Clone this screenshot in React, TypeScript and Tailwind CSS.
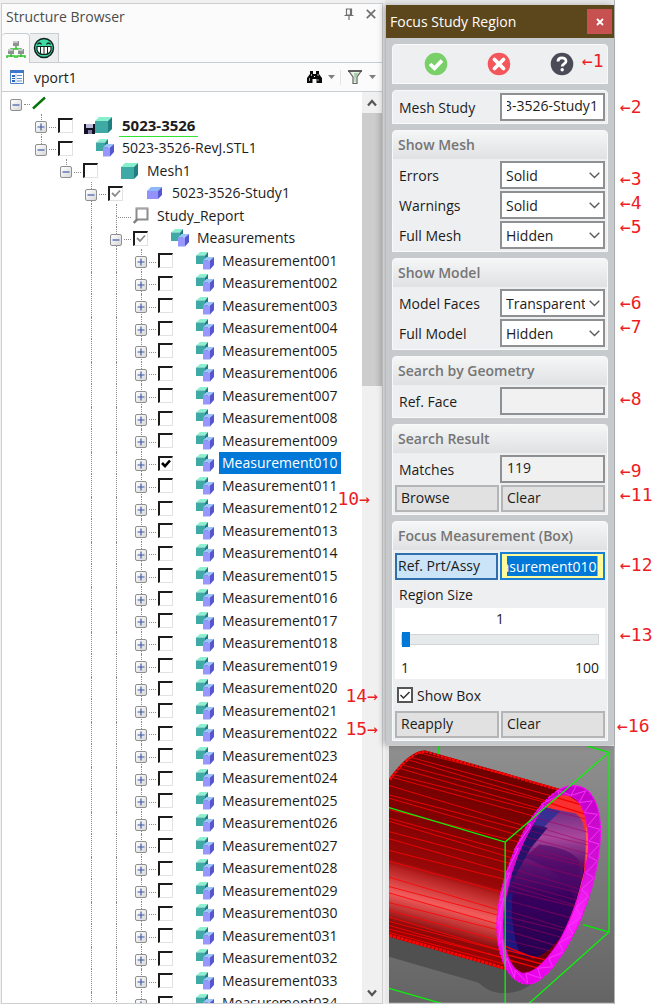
import { useCallback, useId } from "react";
import type { ReactNode } from "react";

/* ---------- small icons ---------- */

function TealCube() {
  return (
    <g>
      <path d="M0 4 4 0H17L13 4Z" fill="#86efcb" />
      <path d="M13 4 17 0V12L13 16Z" fill="#1f7f80" />
      <path d="M0 4H13V16H0Z" fill="#3fa9a6" />
    </g>
  );
}

function CubeIcon() {
  return (
    <svg viewBox="0 0 17 16" className="h-4 w-[17px]">
      <TealCube />
    </svg>
  );
}

function PurpleCubeIcon() {
  return (
    <svg viewBox="0 0 17 16" className="h-4 w-[17px]">
      <path d="M1 6 5 2H16L12 6Z" fill="#8fb8fb" />
      <path d="M12 6 16 2V10L12 14Z" fill="#5457cf" />
      <path d="M1 6H12V14H1Z" fill="#9392fb" />
    </svg>
  );
}

function PairIcon() {
  return (
    <svg viewBox="0 0 18 18" className="h-[18px] w-[18px]">
      <path d="M0 3.500 4 0H12L9 3.500Z" fill="#8ef0cf" />
      <path d="M9 3.500 12 0V9L9 12Z" fill="#1f7f80" />
      <path d="M0 3.500H9V12H0Z" fill="#3fa9a6" />
      <path d="M7 8.500 10.500 5H18L14 8.500Z" fill="#9cc6fb" />
      <path d="M14 8.500 18 5V13L14 17.500Z" fill="#5457cf" />
      <path d="M7 8.500H14V17.500H7Z" fill="#9897fd" />
    </svg>
  );
}

function DiskCubeIcon() {
  return (
    <svg viewBox="0 0 28 17" className="-ml-3 h-[17px] w-7">
      <path d="M0 7H11V17H0Z" fill="#111122" />
      <path d="M2 7H9V11H2Z" fill="#b9b9d8" />
      <path d="M4 13H8V17H4Z" fill="#7d7da5" />
      <g transform="translate(11 0)">
        <TealCube />
      </g>
    </svg>
  );
}

function ReportIcon() {
  return (
    <svg viewBox="0 0 16 17" className="h-[17px] w-4">
      <path d="M3.500 1.500H14.500V12.500H3.500Z" fill="#fff" stroke="#8c8c8c" strokeWidth="2" />
      <path d="M3 1H15" stroke="#bdbdbd" strokeWidth="1" />
      <path d="M4.500 12 .8 16" stroke="#7e7e7e" strokeWidth="2.400" />
    </svg>
  );
}

function StructureTabIcon() {
  return (
    <svg viewBox="0 0 20 20" className="h-5 w-5">
      <path d="M10 7V10M5 12V10H15V12M5 15V18M15 15V18M1 19V17H9V19M11 19V17H19V19" stroke="#2fc22f" strokeWidth="1.500" fill="none" />
      <path d="M7 2H13V7H7ZM2 10H8V15H2ZM12 10H18V15H12Z" fill="#8f9091" />
      <path d="M7 2H12V4H7ZM2 10H7V12H2ZM12 10H17V12H12Z" fill="#c4c5c6" />
    </svg>
  );
}

function GrinTabIcon() {
  return (
    <svg viewBox="0 0 22 22" className="h-[22px] w-[22px]">
      <circle cx="11" cy="11" r="9.500" fill="#3fd9a4" stroke="#10241e" strokeWidth="1.500" />
      <path d="M4.500 7.500Q6.500 4.500 8.500 7.500M13.500 7.500Q15.500 4.500 17.500 7.500" stroke="#10241e" strokeWidth="1.300" fill="none" />
      <path d="M4 9.500H18V13Q17 17.500 11 17.500T4 13Z" fill="#fff" stroke="#10241e" strokeWidth="1.200" />
      <path d="M7.500 9.500V16.500M11 9.500V17M14.500 9.500V16.500" stroke="#10241e" strokeWidth="1" />
    </svg>
  );
}

function VportIcon() {
  return (
    <svg viewBox="0 0 14 14" className="h-[14px] w-[14px]">
      <path d="M.5 .5H13.500V13.500H.5Z" fill="#fff" stroke="#4f82c8" />
      <path d="M0 0H14V3H0Z" fill="#3f78c8" />
      <path d="M2 5H5V7H2ZM2 8H5V9H2ZM2 10H5V12H2Z" fill="#2f67b8" />
      <path d="M7 5.500H12M7 8.500H12M7 11H12" stroke="#5d8fd0" />
      <path d="M6 3V13" stroke="#9fbde6" strokeWidth=".8" />
    </svg>
  );
}

function BinocularsIcon() {
  return (
    <svg viewBox="0 0 15 13" className="h-[13px] w-[15px]">
      <path d="M3 0H6V3H9V0H12V3L15 7V12H9.500V8H5.500V12H0V7L3 3Z" fill="#0a0a0a" />
      <path d="M2.500 7V10M11 8V10M4.500 3V5M11 3V5" stroke="#cfcfcf" strokeWidth=".8" />
      <path d="M7 5H8V6H7Z" fill="#fff" />
    </svg>
  );
}

function FunnelIcon() {
  return (
    <svg viewBox="0 0 14 15" className="h-[15px] w-[14px]">
      <path d="M.8 1H13.200L9 7V13.500H5V7Z" fill="#e9f3e9" stroke="#666" strokeWidth="1.200" />
      <path d="M6 3H11L7.500 8V12H6.500Z" fill="#a9cfaa" />
      <path d="M0 1H14" stroke="#444" strokeWidth="1.500" />
    </svg>
  );
}

function CaretDown() {
  return (
    <svg viewBox="0 0 7 4" className="h-1 w-[7px]">
      <path d="M0 0H7L3.500 4Z" fill="#7d7d7d" />
    </svg>
  );
}

/* ---------- tree ---------- */

type Mark = "none" | "checked" | "partial";

type TreeNode = {
  level: number;
  label: string;
  icon: ReactNode;
  mark?: Mark;
  expander?: "+" | "-";
  guides?: number[];
  above?: boolean;
  below?: boolean;
  selected?: boolean;
  active?: boolean;
};

const measurements: TreeNode[] = Array.from({ length: 34 }, (_, i) => ({
  level: 5,
  label: `Measurement${String(i + 1).padStart(3, "0")}`,
  icon: <PairIcon />,
  mark: i === 9 ? "checked" : "none",
  expander: "+",
  guides: [3, 4],
  above: true,
  below: true,
  selected: i === 9,
}));

const nodes: TreeNode[] = [
  { level: 1, label: "5023-3526", icon: <DiskCubeIcon />, mark: "none", expander: "+", above: true, below: true, active: true },
  { level: 1, label: "5023-3526-RevJ.STL1", icon: <PairIcon />, mark: "none", expander: "-", above: true },
  { level: 2, label: "Mesh1", icon: <CubeIcon />, mark: "none", expander: "-", above: true },
  { level: 3, label: "5023-3526-Study1", icon: <PurpleCubeIcon />, mark: "partial", expander: "-", above: true, below: true },
  { level: 4, label: "Study_Report", icon: <ReportIcon />, guides: [3], above: true, below: true },
  { level: 4, label: "Measurements", icon: <PairIcon />, mark: "partial", expander: "-", guides: [3], above: true, below: true },
  ...measurements,
];

function Expander({ kind }: { kind: "+" | "-" }) {
  return (
    <button
      type="button"
      aria-label={kind === "+" ? "Expand" : "Collapse"}
      className="relative flex h-3 w-3 shrink-0 items-center justify-center rounded-[2px] border border-[#8e8f8f] bg-linear-to-br from-white to-[#d8d8d8]"
    >
      <svg viewBox="0 0 8 8" className="h-2 w-2">
        <path d={kind === "+" ? "M0.500 4H7.500M4 0.500V7.500" : "M0.500 4H7.500"} stroke="#3f5aa8" strokeWidth="1.200" />
      </svg>
    </button>
  );
}

function TreeCheck({ mark, label }: { mark: Mark; label: string }) {
  return (
    <span className="relative flex h-[15px] w-[15px] shrink-0">
      <input
        type="checkbox"
        aria-label={label}
        defaultChecked={mark !== "none"}
        className="h-full w-full appearance-none border-t-2 border-r border-b border-l-2 border-t-[#1c1c1c] border-r-[#e2e2e2] border-b-[#e2e2e2] border-l-[#1c1c1c] bg-white"
      />
      {mark !== "none" && (
        <svg viewBox="0 0 15 15" className="pointer-events-none absolute inset-0">
          <path
            d="M4 7 7 10 12 4.500"
            fill="none"
            stroke={mark === "checked" ? "#000" : "#8a8a8a"}
            strokeWidth={mark === "checked" ? 2.6 : 1.800}
          />
        </svg>
      )}
    </span>
  );
}

function Slot({ line }: { line: boolean }) {
  return (
    <span className="flex w-[25px] shrink-0 self-stretch pl-[6px]">
      {line && <span className="border-l border-dotted border-[#8a8a8a]" />}
    </span>
  );
}

function TreeRow({ node }: { node: TreeNode }) {
  const { level, label, icon, mark, expander, guides = [], above, below, selected, active } = node;
  return (
    <li className="flex items-center odd:h-[23px] even:h-[22px]">
      {Array.from({ length: level }, (_, i) => (
        <Slot key={i} line={guides.includes(i)} />
      ))}
      <span className="relative flex w-[23px] shrink-0 items-center self-stretch pt-[3px]">
        {above && <span className="absolute top-0 left-[6px] h-1/2 border-l border-dotted border-[#8a8a8a]" />}
        {below && <span className="absolute bottom-0 left-[6px] h-1/2 border-l border-dotted border-[#8a8a8a]" />}
        {expander ? <Expander kind={expander} /> : <span className="w-[6px] shrink-0" />}
        <span className="mr-[2px] ml-[2px] w-full border-t border-dotted border-[#8a8a8a]" />
      </span>
      {mark ? (
        <>
          <TreeCheck mark={mark} label={label} />
          <span className="flex w-[46px] shrink-0 justify-start pl-[23px]">{icon}</span>
        </>
      ) : (
        <span className="w-[21px] shrink-0">{icon}</span>
      )}
      <button
        type="button"
        className={
          "h-[22px] px-[3px] leading-[20px] whitespace-nowrap " +
          (selected ? "bg-[#0078d7] text-white" : active ? "border-b border-[#2fe52f] text-[15px] font-bold" : "")
        }
      >
        {label}
      </button>
    </li>
  );
}

function StructureBrowser() {
  return (
    <section className="flex min-w-0 flex-1 flex-col border border-[#cdd0d3] bg-[#fbfbfb]">
      <header className="flex h-[29px] items-center justify-between pr-[6px] pl-1 text-[#4c4c4c]">
        <h1 className="pb-1">Structure Browser</h1>
        <div className="flex gap-3 pb-[10px]">
          <button type="button" aria-label="Pin">
            <svg viewBox="0 0 10 12" className="h-3 w-[10px]">
              <path d="M2.500 1H7.500V7H2.500ZM6.500 1V7M.5 7.500H9.500M5 8V12" fill="none" stroke="#6f6f6f" strokeWidth="1.200" />
            </svg>
          </button>
          <button type="button" aria-label="Close">
            <svg viewBox="0 0 10 10" className="h-[10px] w-[10px]">
              <path d="M.8 .8 9.200 9.200M9.200 .8 .8 9.200" stroke="#6f6f6f" strokeWidth="1.700" />
            </svg>
          </button>
        </div>
      </header>
      <div className="flex h-[30px] shrink-0 border-b border-[#c8cdd1]">
        <button type="button" aria-label="Structure" className="-mb-px flex w-7 items-center justify-center rounded-t border-t border-r border-[#c8cdd1] bg-[#fbfbfb]">
          <StructureTabIcon />
        </button>
        <button type="button" aria-label="Display" className="flex w-[29px] items-center justify-center border-t border-r border-[#c8cdd1] bg-[#eceef0]">
          <GrinTabIcon />
        </button>
      </div>
      <div className="flex h-[29px] shrink-0 items-center border-b border-[#c8cdd1] pr-[6px] pl-2">
        <VportIcon />
        <span className="ml-[10px] flex-1">vport1</span>
        <button type="button" aria-label="Find" className="flex items-center gap-[6px] pr-[5px]">
          <BinocularsIcon />
          <CaretDown />
        </button>
        <button type="button" aria-label="Filter" className="flex items-center gap-[7px] border-l border-[#e4e4e4] pl-[7px]">
          <FunnelIcon />
          <CaretDown />
        </button>
      </div>
      <div className="flex min-h-0 flex-1 bg-white">
        <ul className="min-w-0 flex-1 overflow-hidden pl-2">
          <li className="flex h-[22px] items-center gap-[2px]">
            <span className="flex w-5 items-center gap-[2px] pt-[3px]">
              <Expander kind="-" />
              <span className="w-full border-t border-dotted border-[#8a8a8a]" />
            </span>
            <svg viewBox="0 0 14 14" className="h-[14px] w-[14px]">
              <path d="M1 12.500 13 1.500" stroke="#087408" strokeWidth="2.400" />
            </svg>
          </li>
          <li>
            <ul>
              {nodes.map((n) => (
                <TreeRow key={n.label} node={n} />
              ))}
            </ul>
          </li>
        </ul>
        <div className="flex w-5 shrink-0 flex-col bg-[#f0f0f0]">
          <span className="flex h-[21px] items-center justify-center">
            <svg viewBox="0 0 10 8" className="h-2 w-[10px]">
              <path d="M1 6.500 5 2 9 6.500" fill="none" stroke="#555" strokeWidth="2.200" />
            </svg>
          </span>
          <span className="h-[30%] bg-linear-to-r from-[#cdcdcd] from-60% to-[#bcbcbc]" />
          <span className="mt-auto flex h-[21px] items-center justify-center">
            <svg viewBox="0 0 10 8" className="h-2 w-[10px]">
              <path d="M1 1.500 5 6 9 1.500" fill="none" stroke="#555" strokeWidth="2.200" />
            </svg>
          </span>
        </div>
      </div>
    </section>
  );
}

/* ---------- dialog ---------- */

function Group({ title, children }: { title?: string; children: ReactNode }) {
  return (
    <section className="rounded-t-[4px] border border-[#f8f9f9] bg-[#eeeff1] pb-[2px]">
      {title && (
        <h2 className="h-7 rounded-t-[4px] bg-linear-to-b from-[#f5f6f6] to-[#dfe1e3] px-[5px] leading-[28px] font-semibold text-[#757575]">
          {title}
        </h2>
      )}
      <div className="flex flex-col gap-[2px] px-[2px] pt-[2px]">{children}</div>
    </section>
  );
}

const rowClass = "grid h-7 grid-cols-[103px_minmax(0,1fr)] items-center gap-[2px]";
const fieldClass = "h-7 w-full border-2 border-[#8f9092] px-[5px] pb-1";

function SelectRow({ label, value, options }: { label: string; value: string; options: string[] }) {
  const id = useId();
  return (
    <div className={rowClass}>
      <label htmlFor={id} className="pl-1">{label}</label>
      <span className="relative">
        <select id={id} defaultValue={value} className="h-7 w-full appearance-none overflow-hidden border-2 border-[#8f9092] bg-white pr-[18px] pl-1 text-clip">
          {options.map((o) => (
            <option key={o}>{o}</option>
          ))}
        </select>
        <svg viewBox="0 0 11 7" className="pointer-events-none absolute top-[11px] right-[5px] h-[7px] w-[11px]">
          <path d="M.7 .7 5.500 5.500 10.300 .7" fill="none" stroke="#5c5c5c" strokeWidth="1.400" />
        </svg>
      </span>
    </div>
  );
}

function useScrolledToEnd() {
  return useCallback((el: HTMLInputElement | null) => {
    if (el) el.scrollLeft = el.scrollWidth;
  }, []);
}

function PushButton({ children }: { children: ReactNode }) {
  return (
    <button type="button" className="h-[27px] border-2 border-[#b4b5b6] bg-[#e1e1e1] pb-[2px] pl-1 text-left leading-none">
      {children}
    </button>
  );
}

function FocusDialog() {
  const end = useScrolledToEnd();
  const modes = ["Solid", "Transparent", "Hidden"];
  return (
    <form className="relative flex flex-col bg-[#c6cacd] shadow-[-3px_0_6px_rgba(0,0,0,0.25)]">
      <header className="flex h-[33px] items-center justify-between bg-[#5c461b] pr-[2px] pl-1 text-white">
        <h1 className="text-[14px]">Focus Study Region</h1>
        <button type="button" aria-label="Close dialog" className="flex h-[25px] w-[25px] items-center justify-center bg-[#c75050]">
          <svg viewBox="0 0 8 8" className="h-2 w-2">
            <path d="M1 1 7 7M7 1 1 7" stroke="#fff" strokeWidth="1.800" />
          </svg>
        </button>
      </header>
      <div className="flex flex-col gap-[6px] p-[6px] pb-1">
        <section className="flex h-10 items-center gap-[39px] rounded-t-[4px] border border-[#f8f9f9] bg-[#eeeff1] pl-[31px]">
          <button type="button" aria-label="OK">
            <svg viewBox="0 0 24 24" className="h-6 w-6">
              <circle cx="12" cy="12" r="11.300" fill="#79cf68" />
              <path d="M6 12 10.500 16.300 18 8.500" fill="none" stroke="#fff" strokeWidth="3.800" />
            </svg>
          </button>
          <button type="button" aria-label="Cancel">
            <svg viewBox="0 0 24 24" className="h-6 w-6">
              <circle cx="12" cy="12" r="11.300" fill="#f4575b" />
              <path d="M7.500 7.500 16.500 16.500M16.500 7.500 7.500 16.500" stroke="#fff" strokeWidth="3.800" strokeLinecap="round" />
            </svg>
          </button>
          <button type="button" aria-label="Help">
            <svg viewBox="0 0 24 24" className="h-6 w-6">
              <circle cx="12" cy="12" r="11.300" fill="#4a4b57" />
              <path d="M8 9.500C8 4.800 16 4.800 16 9.200 16 12 12.200 11.800 12.200 14.500" fill="none" stroke="#fff" strokeWidth="2.800" />
              <circle cx="12.200" cy="17.800" r="1.700" fill="#fff" />
            </svg>
          </button>
        </section>

        <Group>
          <div className={rowClass}>
            <label htmlFor="mesh-study" className="pl-1">Mesh Study</label>
            <input id="mesh-study" ref={end} readOnly value="5023-3526-Study1" className={fieldClass + " bg-white"} />
          </div>
        </Group>

        <Group title="Show Mesh">
          <SelectRow label="Errors" value="Solid" options={modes} />
          <SelectRow label="Warnings" value="Solid" options={modes} />
          <SelectRow label="Full Mesh" value="Hidden" options={modes} />
        </Group>

        <Group title="Show Model">
          <SelectRow label="Model Faces" value="Transparent" options={modes} />
          <SelectRow label="Full Model" value="Hidden" options={modes} />
        </Group>

        <Group title="Search by Geometry">
          <div className={rowClass}>
            <label htmlFor="ref-face" className="pl-1">Ref. Face</label>
            <input id="ref-face" className={fieldClass + " bg-[#f1f1f1]"} />
          </div>
        </Group>

        <Group title="Search Result">
          <div className={rowClass}>
            <label htmlFor="matches" className="pl-1">Matches</label>
            <input id="matches" readOnly value="119" className={fieldClass + " bg-[#f1f1f1]"} />
          </div>
          <div className="grid grid-cols-2 gap-[2px]">
            <PushButton>Browse</PushButton>
            <PushButton>Clear</PushButton>
          </div>
        </Group>

        <Group title="Focus Measurement (Box)">
          <div className={rowClass}>
            <button type="button" className="h-[27px] border-2 border-[#2f6fab] bg-[#cce4f7] pl-px text-left leading-none">
              Ref. Prt/Assy
            </button>
            <span className="flex h-7 items-start border-2 border-[#1b7fd4] bg-[#fffb9a] pt-[2px] pr-[5px] pl-[5px]">
              <input
                aria-label="Reference part or assembly"
                ref={end}
                readOnly
                value="Measurement010"
                className="h-5 w-full border-r border-[#e8935a] bg-[#0078d7] text-white"
              />
            </span>
          </div>
          <label htmlFor="region-size" className="h-6 pl-1 leading-[26px]">Region Size</label>
          <div className="flex h-[71px] flex-col bg-white px-[6px] py-px">
            <output htmlFor="region-size" className="text-center leading-[20px]">1</output>
            <input
              id="region-size"
              type="range"
              min={1}
              max={100}
              defaultValue={1}
              className="mt-[3px] h-[15px] w-full appearance-none bg-transparent [&::-webkit-slider-runnable-track]:h-[11px] [&::-webkit-slider-runnable-track]:border [&::-webkit-slider-runnable-track]:border-[#d3d5d6] [&::-webkit-slider-runnable-track]:bg-[#e7eaea] [&::-webkit-slider-thumb]:-mt-[3px] [&::-webkit-slider-thumb]:h-[15px] [&::-webkit-slider-thumb]:w-2 [&::-webkit-slider-thumb]:appearance-none [&::-webkit-slider-thumb]:bg-[#0078d7]"
            />
            <div className="mt-auto flex justify-between leading-[20px]">
              <span>1</span>
              <span>100</span>
            </div>
          </div>
          <label className="flex h-[28px] items-center gap-1 pl-[2px]">
            <span className="relative flex h-4 w-4">
              <input type="checkbox" defaultChecked className="h-4 w-4 appearance-none border-2 border-[#555] bg-white" />
              <svg viewBox="0 0 16 16" className="pointer-events-none absolute inset-0">
                <path d="M3.500 8 6.500 11 12.500 5" fill="none" stroke="#333" strokeWidth="1.500" />
              </svg>
            </span>
            Show Box
          </label>
          <div className="grid grid-cols-2 gap-[2px]">
            <PushButton>Reapply</PushButton>
            <PushButton>Clear</PushButton>
          </div>
        </Group>
      </div>
    </form>
  );
}

/* ---------- 3D view ---------- */

const bodyPath =
  "M12 105C35 70 85 15 125 20L530 135 580 128C480 140 340 400 342 560 345 620 355 660 372 678L12 576Z";
const outerRim =
  "M570 125C632 125 655 205 648 290 640 400 600 520 545 610 500 685 460 717 430 717 375 717 337 640 337 540 340 430 385 320 430 240 480 160 530 122 570 125Z";
const innerRim =
  "M535 152C592 150 612 215 614 300 608 400 568 510 530 580 495 640 450 690 412 685 374 670 354 610 356 530 361 430 394 330 442 246 470 192 505 155 535 152Z";

const streaks = [
  -62, -50, -39, -28, -15, 4, 22, 30, 52, 64, 88, 97, 124, 152, 162, 196, 222, 231, 262, 283,
  318, 350, 398, 426, 445, 474, 497, 517, 530, 542, 553, 563,
];

const rimOuterPts = [[575, 127], [605, 140], [625, 170], [640, 210], [648, 255], [647, 300], [640, 350], [630, 400], [614, 455], [594, 515], [568, 570], [538, 622], [505, 666], [470, 700], [430, 716], [390, 700], [360, 660], [342, 600], [338, 540], [345, 470], [362, 390], [390, 315], [430, 240], [470, 180], [520, 138]];
const rimInnerPts = [[560, 154], [585, 175], [600, 205], [610, 245], [615, 290], [613, 335], [605, 385], [592, 435], [574, 490], [552, 545], [525, 595], [494, 640], [460, 670], [425, 685], [392, 675], [368, 640], [354, 585], [350, 530], [358, 460], [375, 385], [402, 312], [440, 242], [478, 185], [525, 153], [560, 154]];
const rimZigzag = rimOuterPts.map((p, i) => `${i ? "L" : "M"}${p[0]} ${p[1]}L${rimInnerPts[i][0]} ${rimInnerPts[i][1]}`).join("");

function ModelView() {
  return (
    <svg viewBox="12 6 678 771" preserveAspectRatio="none" className="block min-h-0 w-full flex-1" role="img" aria-label="Meshed tube in its focus box">
      <defs>
        <linearGradient id="bg" x1="0" y1="0" x2="0" y2="1">
          <stop offset="0" stopColor="#8f8f8f" />
          <stop offset="1" stopColor="#646464" />
        </linearGradient>
        <linearGradient id="body" gradientUnits="userSpaceOnUse" x1="125" y1="20" x2="-22" y2="566">
          <stop offset="0" stopColor="#6c0000" />
          <stop offset=".35" stopColor="#800202" />
          <stop offset=".6" stopColor="#980808" />
          <stop offset=".64" stopColor="#b52020" />
          <stop offset=".77" stopColor="#f25c5c" />
          <stop offset=".84" stopColor="#c43838" />
          <stop offset=".92" stopColor="#8a0a0a" />
          <stop offset="1" stopColor="#a00000" />
        </linearGradient>
        <linearGradient id="rim" x1="0" y1="0" x2="0" y2="1">
          <stop offset="0" stopColor="#c400c8" />
          <stop offset=".4" stopColor="#d010d4" />
          <stop offset=".65" stopColor="#fb22fb" />
          <stop offset="1" stopColor="#e600e6" />
        </linearGradient>
        <linearGradient id="bore" x1="0" y1="0" x2="0" y2="1">
          <stop offset="0" stopColor="#6a2a80" />
          <stop offset=".2" stopColor="#a9489c" />
          <stop offset=".38" stopColor="#5c1470" />
          <stop offset=".6" stopColor="#38005e" />
          <stop offset="1" stopColor="#260050" />
        </linearGradient>
        <clipPath id="bodyClip"><path d={bodyPath} /></clipPath>
        <clipPath id="innerClip"><path d={innerRim} /></clipPath>
      </defs>
      <path d="M12 6H690V777H12Z" fill="url(#bg)" />
      <path d="M12 560 380 660 470 700 425 728Q400 745 350 745 315 742 292 722 285 713 270 710L12 636Z" fill="#505050" />
      <path d="M160 6V30M610 6 675 25M597 540 675 562" stroke="#00f000" strokeWidth="4" fill="none" />

      <path d={bodyPath} fill="url(#body)" />
      <g clipPath="url(#bodyClip)" stroke="#fb0505" strokeWidth="2.500" fill="none">
        {streaks.map((y, i) => (
          <path key={y} d={`M12 ${y}L600 ${y + 160 + ((i * 7) % 5) * 7 - 14}`} />
        ))}
        <path d="M12 105C35 70 85 15 125 20L540 138" strokeWidth="14" strokeDasharray="9 3" />
        <path d="M12 574 372 676" strokeWidth="14" strokeDasharray="9 3" />
      </g>

      <path d={outerRim} fill="url(#rim)" />
      <path d={innerRim} fill="#6a0008" />
      <g clipPath="url(#innerClip)">
        <path d="M470 185 540 145 620 200V420L560 540 600 380V260Z" fill="#fa3030" />
        <path d="M606 250V370L560 500 540 560 620 450V240Z" fill="#ff6058" />
        <path d="M475 188 575 208Q600 225 604 275 606 350 590 420 570 500 535 570 480 640 440 640L345 612V500L400 320Z" fill="url(#bore)" />
        <path d="M475 186 528 202Q450 270 420 330 385 410 365 450L345 480 400 300Z" fill="#392f94" />
        <path d="M440 240 490 250 440 310 400 380 375 430 390 330Z" fill="#26136c" />
        <path d="M360 460 385 440Q375 540 405 625L350 610Z" fill="#1e1880" />
        <path d="M465 300Q560 310 585 350 592 400 575 470 540 380 420 340Z" fill="#4c0868" opacity=".6" />
        <g stroke="#a00060" strokeWidth="3" opacity=".55">
          {[120, 150, 172, 196, 215, 240, 262, 290, 320, 345, 362, 372, 390, 420, 450, 470, 486, 510, 540].map((y, i) => (
            <path key={y} d={`M340 ${y + 40}L620 ${y + 108 + (i % 3) * 8}`} />
          ))}
        </g>
        <g stroke="#f00000" strokeWidth="4">
          <path d="M480 150 620 190M475 170 620 215M350 612 520 655M350 625 500 665M360 642 480 675M350 600 450 640" />
        </g>
      </g>
      <path d={rimZigzag} fill="none" stroke="#ff3cff" strokeWidth="2.500" />
      <path d={outerRim} fill="none" stroke="#ff00ff" strokeWidth="4" strokeDasharray="10 3" />
      <path d={innerRim} fill="none" stroke="#f000e0" strokeWidth="3" />

      <path
        d="M12 190 362 293 675 25V562L432 777M362 293V777M12 730 170 775"
        fill="none"
        stroke="#0df20d"
        strokeWidth="4"
      />
      <path d="M12 775H690" stroke="#c9cccf" strokeWidth="4" />
    </svg>
  );
}

/* ---------- callouts drawn over the window ---------- */

const callouts = [
  { text: "←1", place: "left-[197px] top-[51px]" },
  { text: "←2", place: "left-[235px] top-[97px]" },
  { text: "←3", place: "left-[235px] top-[169px]" },
  { text: "←4", place: "left-[235px] top-[193px]" },
  { text: "←5", place: "left-[235px] top-[217px]" },
  { text: "←6", place: "left-[235px] top-[293px]" },
  { text: "←7", place: "left-[235px] top-[317px]" },
  { text: "←8", place: "left-[235px] top-[389px]" },
  { text: "←9", place: "left-[235px] top-[461px]" },
  { text: "10→", place: "right-[286px] top-[489px]" },
  { text: "←11", place: "left-[235px] top-[485px]" },
  { text: "←12", place: "left-[235px] top-[555px]" },
  { text: "←13", place: "left-[235px] top-[625px]" },
  { text: "14→", place: "right-[278px] top-[686px]" },
  { text: "15→", place: "right-[278px] top-[719px]" },
  { text: "←16", place: "left-[232px] top-[716px]" },
];

export default function App() {
  return (
    <main className="flex h-screen min-h-[860px] overflow-hidden bg-white font-['Open_Sans','Noto_Sans',sans-serif] text-[14px] text-[#1c1c1c]">
      <div className="flex min-w-0 flex-1 bg-[#f0f0f0] pt-[3px] pr-[2px] pl-px">
        <StructureBrowser />
      </div>
      <div className="relative flex w-[271px] shrink-0">
        <div className="flex w-[230px] flex-col border-r border-[#b0b3b5] bg-[#e8e8e8] pt-[5px] pl-px">
          <FocusDialog />
          <div className="flex min-h-0 flex-1 flex-col pt-px pl-[3px]">
            <ModelView />
          </div>
        </div>
        {callouts.map((c) => (
          <span
            key={c.text}
            className={"absolute font-['DejaVu_Sans_Mono',monospace] text-[18px] leading-[20px] whitespace-nowrap text-[#ee1c24] " + c.place}
          >
            {c.text}
          </span>
        ))}
      </div>
    </main>
  );
}
